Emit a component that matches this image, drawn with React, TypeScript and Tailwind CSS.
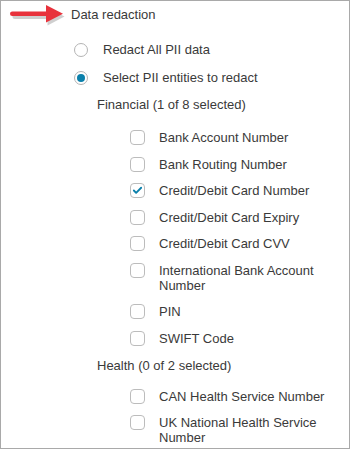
import { Check } from 'lucide-react'

interface Group {
  title: string
  items: { label: string; checked?: boolean }[]
}

const GROUPS: Group[] = [
  {
    title: 'Financial (1 of 8 selected)',
    items: [
      { label: 'Bank Account Number' },
      { label: 'Bank Routing Number' },
      { label: 'Credit/Debit Card Number', checked: true },
      { label: 'Credit/Debit Card Expiry' },
      { label: 'Credit/Debit Card CVV' },
      { label: 'International Bank Account Number' },
      { label: 'PIN' },
      { label: 'SWIFT Code' },
    ],
  },
  {
    title: 'Health (0 of 2 selected)',
    items: [{ label: 'CAN Health Service Number' }, { label: 'UK National Health Service Number' }],
  },
]

function Radio({ label, checked }: { label: string; checked?: boolean }) {
  return (
    <div className="flex items-center gap-[15px] pl-[73px]">
      <span className="flex h-[14px] w-[14px] shrink-0 items-center justify-center rounded-full border border-[#b4b4b4] bg-white">
        {checked && <span className="h-[8px] w-[8px] rounded-full bg-[#0b80ab]" />}
      </span>
      <span>{label}</span>
    </div>
  )
}

function CheckRow({ label, checked }: { label: string; checked?: boolean }) {
  return (
    <div className="flex items-start gap-[14px] pl-[129px] pr-3">
      <span className="flex h-[15px] w-[15px] shrink-0 items-center justify-center rounded-[4px] border border-[#bcbcbc] bg-white">
        {checked && <Check size={11} strokeWidth={4} className="text-[#0b80ab]" />}
      </span>
      <span>{label}</span>
    </div>
  )
}

function Arrow() {
  return (
    <svg className="absolute left-[7px] top-[3px]" width="60" height="24" viewBox="0 0 60 24">
      <g transform="translate(1.5,2)" fill="#8a8a8a" opacity="0.4">
        <rect x="3" y="8" width="40" height="5" rx="2.5" />
        <path d="M38 1.5 L55 10.5 L38 19.5 Z" />
      </g>
      <g fill="#e8323c">
        <rect x="2" y="7.5" width="40" height="4.5" rx="2.25" />
        <path d="M38 1 L55 9.75 L38 18.5 Z" />
      </g>
    </svg>
  )
}

export default function App() {
  return (
    <div className="relative h-[449px] w-[350px] overflow-hidden border border-[#a9a9a9] bg-white font-['Liberation_Sans',Arial,sans-serif] text-[13px] leading-[15px] text-[#3a3a3a]">
      <Arrow />
      <div className="pl-[70px] pt-[6px]">Data redaction</div>

      <div className="mt-[20px] flex flex-col gap-[13px]">
        <Radio label="Redact All PII data" />
        <Radio label="Select PII entities to redact" checked />
      </div>

      {GROUPS.map((group, i) => (
        <div key={group.title} className="mt-[12px]">
          <div className="pl-[96px]">{group.title}</div>
          <div className={`flex flex-col gap-[11.5px] ${i === 0 ? 'mt-[18px]' : 'mt-[16px]'}`}>
            {group.items.map((item) => (
              <CheckRow key={item.label} label={item.label} checked={item.checked} />
            ))}
          </div>
        </div>
      ))}
    </div>
  )
}
